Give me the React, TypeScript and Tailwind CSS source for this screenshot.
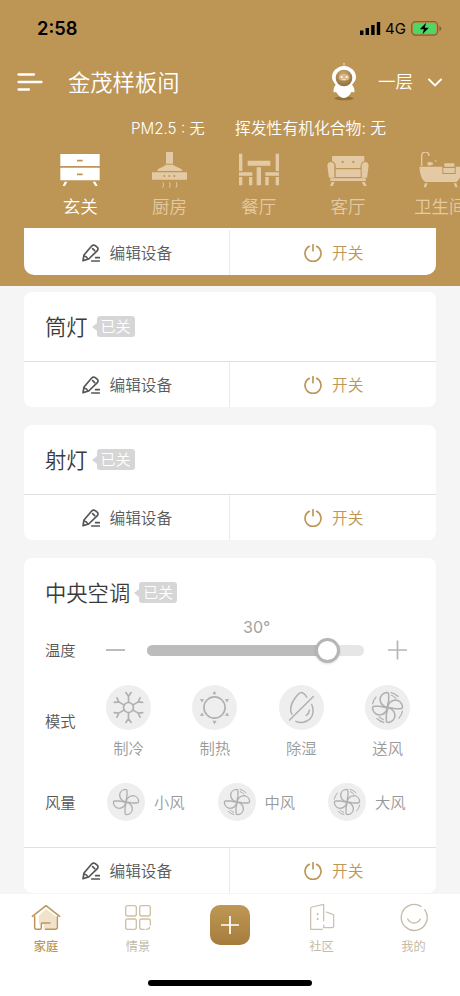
import React from 'react'

const rooms = [
  { id: 1, name: '玄关', icon: CabinetIcon, active: true },
  { id: 2, name: '厨房', icon: HoodIcon },
  { id: 3, name: '餐厅', icon: DiningIcon },
  { id: 4, name: '客厅', icon: SofaIcon },
  { id: 5, name: '卫生间', icon: BathIcon }
]

const modes = [
  { id: 1, name: '制冷', icon: SnowIcon },
  { id: 2, name: '制热', icon: SunIcon },
  { id: 3, name: '除湿', icon: DryIcon },
  { id: 4, name: '送风', icon: () => <FanIcon level={3} size={45} /> }
]

const speeds = [
  { id: 1, name: '小风', level: 1, width: 'w-[110.5px]' },
  { id: 2, name: '中风', level: 2, width: 'w-[110.5px]' },
  { id: 3, name: '大风', level: 3, width: 'w-[90px]' }
]

function CabinetIcon() {
  return (
    <svg width="40" height="36" viewBox="0 0 120 108" fill="currentColor">
      <path d="M1 6h118v36H1zM1 47h118v38H1z" />
      <path d="M14 89h8l-7 13H8zM98 89h8l7 13h-7z" />
      <path d="M51 26h17M51 67h17" stroke="#bd9656" strokeWidth="5" />
    </svg>
  )
}

function HoodIcon() {
  return (
    <svg width="40" height="36" viewBox="0 0 120 108" fill="currentColor">
      <path d="M51 0h21v35H51zM50 38h23c4 8 24 7 28 19H24c4-12 22-11 26-19zM9 61h105v22H9z" />
      <path d="M42 91q4 7-1 16M62 91q4 7-1 16M82 91q4 7-1 16" stroke="currentColor" strokeWidth="3" fill="none" />
      <g fill="#bd9656">
        <circle cx="46" cy="72" r="3" />
        <circle cx="61" cy="72" r="3" />
        <circle cx="76" cy="72" r="3" />
      </g>
    </svg>
  )
}

function DiningIcon() {
  return (
    <svg width="40" height="36" viewBox="0 0 120 108" fill="currentColor">
      <path d="M0 5h10v52H0zM110 5h10v52h-10zM26 26h68v15H26zM53 46h13v54H53z" />
      <path d="M0 61h40v10H0zM79 61h41v10H79zM0 75h10v25H0zM30 75h10v25H30zM79 75h10v25H79zM110 75h10v25h-10z" />
    </svg>
  )
}

function SofaIcon() {
  return (
    <svg width="42" height="36" viewBox="0 0 126 108" fill="currentColor">
      <path d="M18 12h91q3 0 3 4v11q-12 3-12 21H27q0-18-12-21V16q0-4 3-4z" />
      <path d="M1 38q2-8 10-8t11 9v38H6q-3-20-5-39zM125 38q-2-8-10-8t-11 9v38h16q3-20 5-39zM26 52h75v23H26zM10 79h106v8H10zM14 90h9l-6 12H9zM104 90h9l6 12h-8z" />
      <circle cx="47" cy="30" r="3.5" fill="#bd9656" />
      <circle cx="79" cy="30" r="3.5" fill="#bd9656" />
    </svg>
  )
}

function BathIcon() {
  return (
    <svg width="42" height="36" viewBox="0 0 126 108" fill="currentColor">
      <path d="M8 42V12C8-4 30-4 30 12" fill="none" stroke="currentColor" strokeWidth="4" />
      <path d="M1 44h69v22h40V44h16c2 20-2 38-14 46H20C6 82 3 62 1 44z" />
      <path d="M76 34h30v10H76zM73 48h34v15H73z" />
      <path d="M18 94h8l-5 12h-7zM104 94h8l4 12h-7z" />
      <circle cx="31" cy="35" r="6" />
      <circle cx="38" cy="35" r="4" />
      <circle cx="50" cy="27" r="2.5" />
    </svg>
  )
}

function SnowIcon() {
  return (
    <svg width="45" height="45" viewBox="-68 -68 136 136" fill="none" stroke="#b0b0b0" strokeWidth="5" strokeLinecap="round">
      <circle r="15" />
      {[0, 60, 120, 180, 240, 300].map((deg) => (
        <path key={deg} d="M0-16V-34M0-34L-8-45M0-34L8-45" transform={`rotate(${deg})`} />
      ))}
    </svg>
  )
}

function SunIcon() {
  return (
    <svg width="45" height="45" viewBox="-68 -68 136 136" fill="none" stroke="#b0b0b0">
      <circle r="32" strokeWidth="5" />
      {[0, 60, 120, 180, 240, 300].map((deg) => (
        <path key={deg} d="M0-51L6-40H-6Z" fill="#b0b0b0" stroke="none" transform={`rotate(${deg})`} />
      ))}
    </svg>
  )
}

function DryIcon() {
  return (
    <svg width="45" height="45" viewBox="-68 -68 136 136" fill="none" stroke="#b0b0b0" strokeWidth="4.5" strokeLinecap="round" strokeLinejoin="round">
      <path d="M-29 20C-37 6-31-12-20-28C-14-36-10-41-4-44Q0-47 4-44C9-41 13-37 16-31" />
      <path d="M31-9C38 6 36 24 26 34C15 45-3 49-17 42" />
      <path d="M-36 38L36-33M24 8Q23 18 14 24" />
    </svg>
  )
}

function FanIcon({ level, size }: { level: number; size: number }) {
  const box = size * 3
  return (
    <svg width={size} height={size} viewBox={`${-box / 2} ${-box / 2} ${box} ${box}`} fill="none" stroke="#b0b0b0" strokeWidth="4" strokeLinecap="round" strokeLinejoin="round">
      <g transform={size > 40 ? 'scale(1.18)' : undefined}>
        {[0, 90, 180, 270].map((deg) => (
          <path key={deg} d="M0 0C-9-2-18-9-19-20C-19-30-11-37-2-38Q3-38 3-33V-20C3-12-1-8 0 0" transform={`rotate(${deg})`} />
        ))}
        {level > 1 && (
          <g strokeWidth="3">
            <path d="M9-38Q19-36 27-28M10-31Q16-29 21-24" />
            <path d="M-9 38Q-19 36-27 28M-10 31Q-16 29-21 24" />
          </g>
        )}
        {level > 2 && (
          <g strokeWidth="3">
            <path d="M-38-9Q-36-19-29-27" />
            <path d="M38 9Q36 19 29 27" />
          </g>
        )}
      </g>
    </svg>
  )
}

function EditIcon() {
  return (
    <svg width="18" height="18" viewBox="0 0 54 54" fill="none" stroke="#555" strokeWidth="5" strokeLinecap="round" strokeLinejoin="round">
      <path d="M3 50L6 33L29 6Q34 1 40 5L46 10Q50 15 46 20L20 45L3 50Z" />
      <path d="M32 14L38 20M6 36Q14 37 18 45M41 41H52M29 51H52" />
    </svg>
  )
}

function PowerIcon() {
  return (
    <svg width="18" height="18" viewBox="0 0 54 54" fill="none" stroke="#bd9656" strokeWidth="5" strokeLinecap="round">
      <path d="M16 7A24 24 0 1 0 38 7M27 2V20" />
    </svg>
  )
}

function Robot() {
  return (
    <svg width="26" height="40" viewBox="0 0 78 120">
      <defs>
        <radialGradient id="face" cx="45%" cy="30%" r="75%">
          <stop offset="0" stopColor="#d0ad76" />
          <stop offset="1" stopColor="#8a6a38" />
        </radialGradient>
      </defs>
      <ellipse cx="39" cy="109" rx="29" ry="6" fill="#94703a" />
      <path d="M39 4V16" stroke="#f3e6d0" strokeWidth="2.5" />
      <circle cx="39" cy="5" r="2.5" fill="#e6c89b" />
      <path d="M39 12C18 13 3 28 3 45C3 56 9 61 14 68C9 74 6 84 8 90Q11 92 15 89C20 99 28 107 38 108C49 107 57 99 62 89Q67 92 70 90C72 84 69 74 63 68C69 61 75 56 75 45C75 28 60 13 39 12Z" fill="#fff" />
      <circle cx="39" cy="48" r="25" fill="url(#face)" />
      <path d="M24 46Q24 36 39 36T55 46T39 56T24 46Z" fill="#dcb98a" />
      <circle cx="32" cy="45" r="3" fill="#fff" />
      <circle cx="47" cy="45" r="3" fill="#fff" />
      <path d="M34 52H44" stroke="#fff" strokeWidth="2" />
    </svg>
  )
}

function CardActions() {
  return (
    <div className="flex h-[45px] text-[15.7px]">
      <div className="flex w-[206px] items-center border-r border-[#eaeaea] pl-[58px] text-[#5a5a5a]">
        <EditIcon />
        <span className="ml-[9.5px]">编辑设备</span>
      </div>
      <div className="flex flex-1 items-center pl-[74px] text-[#bd9656]">
        <PowerIcon />
        <span className="ml-[10px]">开关</span>
      </div>
    </div>
  )
}

function CardTitle({ name }: { name: string }) {
  return (
    <div className="flex h-[69px] items-center pl-[21px]">
      <h3 className="-mt-[2px] text-[21.3px] text-[#3a3a3a]">{name}</h3>
      <svg className="ml-[4px]" width="5" height="8" viewBox="0 0 5 8">
        <path d="M5 0V8L0 4Z" fill="#d6d6d6" />
      </svg>
      <span className="flex h-[21px] w-[38px] items-center justify-center rounded-[3px] bg-[#d6d6d6] pb-[1px] text-[15px] text-white">已关</span>
    </div>
  )
}

function LightCard({ name }: { name: string }) {
  return (
    <div className="h-[115px] shrink-0 rounded-[8px] bg-white">
      <CardTitle name={name} />
      <div className="border-t border-[#e0e0e0]">
        <CardActions />
      </div>
    </div>
  )
}

function AirConditionerCard() {
  return (
    <div className="h-[335px] shrink-0 rounded-[8px] bg-white">
      <CardTitle name="中央空调" />

      {/* Temperature */}
      <div className="flex h-[46px] items-center pl-[21px] text-[15.3px] text-[#555]">
        <span className="-mt-[2px] w-[61px]">温度</span>
        <div className="h-[2px] w-[19px] bg-[#bcbcbc]" />
        <div className="relative ml-[22px] h-[11px] w-[217px] rounded-full bg-[#e6e6e6]">
          <div className="h-full w-[180px] rounded-full bg-[#bcbcbc]" />
          <div className="absolute -top-[7px] left-[168px] h-[25px] w-[25px] rounded-full border-[3px] border-[#b5b5b5] bg-white shadow" />
          <span className="absolute -top-[26px] left-[96px] font-['Inter'] text-[16px] font-normal leading-[16px] text-[#a3a3a3]">30°</span>
        </div>
        <svg className="ml-[24px]" width="19" height="20" viewBox="0 0 19 20" stroke="#b5b5b5" strokeWidth="1.7">
          <path d="M0 10H19M9.5 0.5V19.5" />
        </svg>
      </div>

      {/* Mode */}
      <div className="flex h-[90px] pl-[21px] pt-[12px]">
        <span className="mt-[23px] w-[61px] text-[15.3px] text-[#555]">模式</span>
        <div className="flex gap-[41.4px]">
          {modes.map((mode) => {
            const Icon = mode.icon
            return (
              <div key={mode.id} className="flex w-[45px] flex-col items-center">
                <div className="h-[45px] w-[45px] rounded-full bg-[#eeeeee]">
                  <Icon />
                </div>
                <span className="mt-[5px] whitespace-nowrap text-[15.3px] text-[#999]">{mode.name}</span>
              </div>
            )
          })}
        </div>
      </div>

      {/* Fan speed */}
      <div className="flex h-[84px] items-center pl-[21px] pb-[8px] pt-[1px] text-[15.3px]">
        <span className="-mt-[1px] w-[62px] text-[#555]">风量</span>
        {speeds.map((speed) => (
          <div key={speed.id} className={`flex items-center ${speed.width}`}>
            <div className="h-[38px] w-[38px] shrink-0 rounded-full bg-[#eeeeee]">
              <FanIcon level={speed.level} size={38} />
            </div>
            <span className="-mt-[1px] ml-[9px] text-[#999]">{speed.name}</span>
          </div>
        ))}
      </div>

      <div className="border-t border-[#e0e0e0]">
        <CardActions />
      </div>
    </div>
  )
}

function StatusBar() {
  return (
    <div className="flex h-[56px] items-center pl-[37px] pr-[18px] text-black">
      <span className="font-['Inter'] text-[18.3px] font-semibold">2:58</span>
      <svg className="ml-auto" width="22" height="14" viewBox="0 0 22 14">
        <path d="M1 9.5h3.4V14H1zM6.6 7H10v7H6.6zM12.2 4h3.4v10h-3.4zM17.8 1h3.4v13h-3.4z" />
      </svg>
      <span className="ml-[4px] mt-[1px] font-['Inter'] text-[15px] font-normal">4G</span>
      <svg className="ml-[5px]" width="31" height="15" viewBox="0 0 31 15">
        <rect x="0.7" y="0.7" width="26" height="13.4" rx="4" fill="none" stroke="#7d6232" strokeWidth="1.3" />
        <rect x="2.5" y="2.4" width="22.4" height="10" rx="2.4" fill="#4bd964" />
        <path d="M28.4 5v5q2-1 2-2.5T28.4 5z" fill="#7d6232" />
        <path d="M15.2 1.8L8.8 8.3h4.1l-1.4 5 6.3-6.6h-4.1z" fill="#000" />
      </svg>
    </div>
  )
}

function TabBar() {
  return (
    <div className="flex h-[102px] flex-col bg-white">
      <div className="flex h-[62px] text-[12.2px] text-[#c5bba8]">
        <div className="flex w-[92px] flex-col items-center pt-[9px] text-[#bd9656]">
          <svg width="30" height="30" viewBox="0 0 90 90" fill="none" stroke="#bd9656" strokeWidth="4.5" strokeLinecap="round" strokeLinejoin="round">
            <path d="M24 38L45 18L76 42V80H38V64H24Z" fill="#f0e2cb" stroke="none" />
            <path d="M4 40L45 8L86 40M11 40V74Q11 79 16 79H28Q31 79 31 75V63Q31 60 34 60H57M44 79H72Q79 79 79 73V41" />
          </svg>
          <span className="mt-[5px] font-medium leading-[16px]">家庭</span>
        </div>
        <div className="flex w-[92px] flex-col items-center pt-[9px]">
          <svg width="30" height="30" viewBox="0 0 90 90" fill="none" stroke="#cfc0a6" strokeWidth="4" strokeLinecap="round">
            <rect x="8" y="8" width="32" height="31" rx="6" />
            <rect x="50" y="8" width="32" height="31" rx="6" />
            <rect x="8" y="48" width="32" height="31" rx="6" />
            <path d="M64 79H56Q50 79 50 73V54Q50 48 56 48H76Q82 48 82 54V66M70 79Q79 78 80 73" />
          </svg>
          <span className="mt-[5px] font-normal leading-[16px]">情景</span>
        </div>
        <div className="flex w-[92px] justify-center pt-[11px]">
          <div className="flex h-[40px] w-[40px] items-center justify-center rounded-[10px] bg-gradient-to-b from-[#bf9855] to-[#a57c3c]">
            <svg width="18" height="18" viewBox="0 0 18 18" stroke="#fff" strokeWidth="1.7">
              <path d="M0 9H18M9 0V18" />
            </svg>
          </div>
        </div>
        <div className="flex w-[91px] flex-col items-center pt-[9px]">
          <svg width="30" height="30" viewBox="0 0 90 90" fill="none" stroke="#cbbfae" strokeWidth="3.6" strokeLinecap="round" strokeLinejoin="round">
            <path d="M50 54V4L15 12Q11 13 11 18V79H46M50 66V74H76Q80 74 80 70V38Q80 35 77 34L58 27" />
            <path d="M32 33V34M32 48V49" strokeWidth="6" />
          </svg>
          <span className="mt-[5px] font-normal leading-[16px]">社区</span>
        </div>
        <div className="flex w-[93px] flex-col items-center pt-[9px]">
          <svg width="30" height="30" viewBox="0 0 90 90" fill="none" stroke="#c5bba8" strokeWidth="4" strokeLinecap="round">
            <path d="M77 20A39 39 0 1 1 66 10M26 48Q32 60 45 60Q58 60 64 48" />
          </svg>
          <span className="mt-[5px] font-normal leading-[16px]">我的</span>
        </div>
      </div>
      <div className="mx-auto mt-[24px] h-[6px] w-[164px] rounded-full bg-black" />
    </div>
  )
}

export default function App() {
  return (
    <div className="h-[996px] w-[460px] overflow-hidden bg-[#f5f5f5] font-['Noto_Sans_CJK_SC',sans-serif] font-[350] leading-[24px]">
      {/* Header */}
      <header className="h-[286px] overflow-hidden bg-[#bd9656] text-white">
        <StatusBar />
        <div className="flex h-[52px] items-center pl-[17px] pr-[18px]">
          <svg width="26" height="18" viewBox="0 0 26 18" stroke="#fff" strokeWidth="2.3" strokeLinecap="round">
            <path d="M1.5 1.5H17M1.5 9H24.5M1.5 16.5H12" />
          </svg>
          <h1 className="-mt-[2px] ml-[25px] text-[22.3px]">金茂样板间</h1>
          <div className="ml-auto">
            <Robot />
          </div>
          <span className="-mt-[2px] ml-[21px] text-[17.5px]">一层</span>
          <svg className="ml-[15px]" width="14" height="9" viewBox="0 0 14 9" fill="none" stroke="#fff" strokeWidth="1.8" strokeLinecap="round">
            <path d="M1 1.5L7 7.5L13 1.5" />
          </svg>
        </div>
        <div className="flex h-[40px] items-center whitespace-nowrap pl-[131px] pt-[1px] font-['Inter','Noto_Sans_CJK_SC',sans-serif]">
          <span className="w-[104px] text-[15.2px]">PM2.5 : 无</span>
          <span className="text-[15.8px]">挥发性有机化合物: 无</span>
        </div>
        <div className="flex h-[80px] w-[490px] pl-[35.5px] pt-[4px]">
          {rooms.map((room) => {
            const Icon = room.icon
            return (
              <div
                key={room.id}
                className={`flex w-[89.3px] shrink-0 flex-col items-center last:ml-[3px] ${room.active ? 'text-white' : 'text-[#e3caa5]'}`}
              >
                <Icon />
                <span className="mt-[6px] whitespace-nowrap text-[17.5px]">{room.name}</span>
              </div>
            )
          })}
        </div>
        <div className="mx-[24px] h-[47px] rounded-b-[10px] bg-white pt-[2px]">
          <CardActions />
        </div>
      </header>

      {/* Devices */}
      <main className="flex h-[608px] flex-col gap-[18px] overflow-hidden px-[24px] pt-[6px]">
        <LightCard name="筒灯" />
        <LightCard name="射灯" />
        <AirConditionerCard />
      </main>

      <TabBar />
    </div>
  )
}
